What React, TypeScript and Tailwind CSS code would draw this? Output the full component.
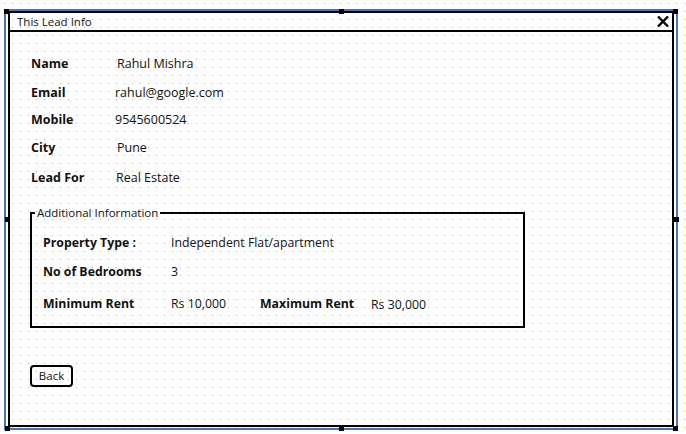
export default function App() {
  const handles = [
    [4, 9], [339, 9], [673, 9],
    [5, 217], [674, 217],
    [5, 426], [339, 426], [673, 426],
  ];
  return (
    <div className="relative w-[686px] h-[434px] bg-white overflow-hidden font-['Open_Sans','Segoe_UI',sans-serif] text-[#111]">
      <svg className="absolute inset-0" width="686" height="434">
        <defs>
          <pattern id="dots" x="4" y="3" width="8" height="8" patternUnits="userSpaceOnUse">
            <rect width="1" height="1" fill="#b8b8b8" />
          </pattern>
        </defs>
        <rect width="686" height="434" fill="url(#dots)" />
      </svg>

      <div className="relative pt-[9px] pl-[4px]">
        <div className="w-[674px] h-[421px] border-2 border-[#4a72c0] flex flex-col">
          <div className="flex-1 mx-[2px] mb-[1px] border-2 border-black flex flex-col">
            {/* Title bar */}
            <div className="h-[19px] border-b-2 border-black flex items-center justify-between pl-[7px] pr-[3px]">
              <span className="text-[11.5px] leading-none">This Lead Info</span>
              <svg width="12" height="11" viewBox="0 0 12 11">
                <path d="M1 0.5 L11 10.5 M11 0.5 L1 10.5" stroke="#000" strokeWidth="2.4" />
              </svg>
            </div>

            {/* Content */}
            <div className="flex flex-col">
              <div className="flex flex-col pl-[21px] text-[12.5px]">
                <div className="h-[20px] mt-[22px] flex items-center">
                  <span className="w-[84px] font-bold">Name</span>
                  <span className="pl-[2px]">Rahul Mishra</span>
                </div>
                <div className="h-[20px] mt-[9px] flex items-center">
                  <span className="w-[84px] font-bold">Email</span>
                  <span>rahul@google.com</span>
                </div>
                <div className="h-[20px] mt-[7px] flex items-center">
                  <span className="w-[84px] font-bold">Mobile</span>
                  <span>9545600524</span>
                </div>
                <div className="h-[20px] mt-[8px] flex items-center">
                  <span className="w-[84px] font-bold">City</span>
                  <span className="pl-[2px]">Pune</span>
                </div>
                <div className="h-[20px] mt-[10px] flex items-center">
                  <span className="w-[84px] font-bold">Lead For</span>
                  <span className="pl-[1px]">Real Estate</span>
                </div>
              </div>

              <fieldset className="ml-[20px] mt-[17px] w-[495px] border-2 border-black pb-[12px]">
                <legend className="ml-[3px] px-[2px] text-[11.5px] leading-[16px]">Additional Information</legend>
                <div className="pl-[11px] text-[12.3px]">
                  <div className="h-[20px] mt-[12px] flex items-center">
                    <span className="w-[128px] font-bold">Property Type :</span>
                    <span>Independent Flat/apartment</span>
                  </div>
                  <div className="h-[20px] mt-[9px] flex items-center">
                    <span className="w-[128px] font-bold">No of Bedrooms</span>
                    <span>3</span>
                  </div>
                  <div className="h-[20px] mt-[12px] flex items-center">
                    <span className="w-[128px] font-bold">Minimum Rent</span>
                    <span className="w-[89px] pt-[1px]">Rs 10,000</span>
                    <span className="w-[111px] font-bold pt-[1px]">Maximum Rent</span>
                    <span className="pt-[2px]">Rs 30,000</span>
                  </div>
                </div>
              </fieldset>

              <div className="ml-[20px] mt-[37px]">
                <div className="w-[43px] h-[22px] border-2 border-black rounded-[4px] flex items-center justify-center text-[11.5px]">
                  Back
                </div>
              </div>
            </div>
          </div>
        </div>
      </div>

      {handles.map(([x, y], i) => (
        <div
          key={i}
          className="absolute w-[5px] h-[5px] bg-black"
          style={{ left: x, top: y }}
        />
      ))}
    </div>
  );
}
